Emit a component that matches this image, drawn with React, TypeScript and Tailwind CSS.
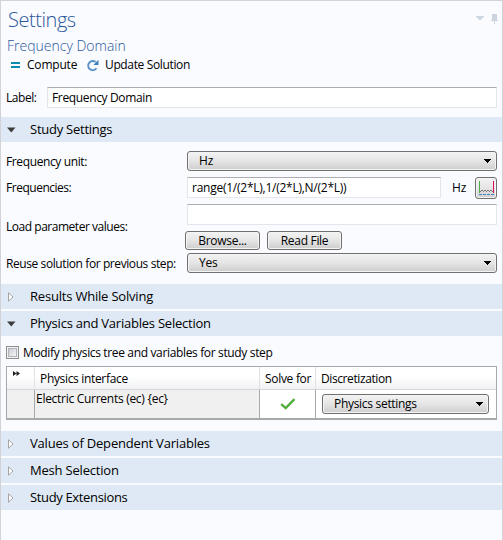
import React from "react";

function Caret({ className = "" }: { className?: string }) {
  return (
    <svg className={className} width="7" height="4" viewBox="0 0 7 4" shapeRendering="crispEdges">
      <path d="M0 0h7v1H6v1H5v1H4v1H3V3H2V2H1V1H0z" fill="#000" />
    </svg>
  );
}

function Section({ title, open = false, tracking }: { title: string; open?: boolean; tracking: string }) {
  return (
    <div className="flex h-[25px] shrink-0 items-center bg-[#dfe9f5] text-[13px]">
      <div className="flex w-[29px] pl-[6px]">
        {open ? (
          <svg width="9" height="6" viewBox="0 0 9 6">
            <path d="M0 .5h8.5L4.3 5.5z" fill="#3c3c3c" />
          </svg>
        ) : (
          <svg className="ml-px" width="6" height="10" viewBox="0 0 6 10">
            <path d="M.5 .8v8.4L5 5z" fill="#fff" stroke="#9b9b9b" strokeWidth=".9" />
          </svg>
        )}
      </div>
      <span className={tracking}>{title}</span>
    </div>
  );
}

const buttonLook =
  "rounded-[3px] border border-[#707070] bg-linear-to-b from-[#f3f3f3] via-[#e5e5e5] to-[#cdcdcd] shadow-[inset_0_0_0_1px_#f4f4f4]";
const fieldLook = "h-[21px] border border-[#e3e6ec] border-t-[#abadb3] bg-white";

function Select({ value, tracking, className = "" }: { value: string; tracking: string; className?: string }) {
  return (
    <div className={`flex h-5 items-center justify-between pr-[5px] ${buttonLook} ${className}`}>
      <span className={tracking}>{value}</span>
      <Caret />
    </div>
  );
}

export default function App() {
  return (
    <div className="flex h-[540px] w-[503px] flex-col overflow-hidden border-x border-t border-[#d2d3d8] bg-[#fafbff] font-['Open_Sans','Noto_Sans',sans-serif] text-[12px] leading-none whitespace-nowrap text-black">
      <div className="flex h-[36px] items-start justify-between pt-[8px] pr-[4px] pl-[7px]">
        <h1 className="text-[20px] leading-[22px] font-light tracking-[-0.45px] text-[#29579b]">Settings</h1>
        <div className="flex items-start gap-[7px] pt-[5px]">
          <svg className="mt-[2px]" width="8" height="4" viewBox="0 0 8 4" shapeRendering="crispEdges">
            <path d="M0 0h8v1H7v1H6v1H5v1H3V3H2V2H1V1H0z" fill="#ccd4df" />
          </svg>
          <svg width="7" height="10" viewBox="0 0 7 10" shapeRendering="crispEdges">
            <path d="M1 0h5v6h1v1H4v3H3V7H0V6h1z" fill="#ccd4df" />
          </svg>
        </div>
      </div>
      <h2 className="h-[19px] pl-[6px] text-[14px] leading-[18px] font-light text-[#29579b]">
        Frequency Domain
      </h2>
      <div className="flex h-[18px] items-center pl-[10px]">
        <svg width="9" height="6" viewBox="0 0 9 6" shapeRendering="crispEdges">
          <path d="M0 0h9v2H0zM0 4h9v2H0z" fill="#078bb2" />
        </svg>
        <span className="ml-[7px] w-[59px] tracking-[-0.2px]">Compute</span>
        <svg width="14" height="13" viewBox="0 0 14 13">
          <path d="M10.5 9.3A4.6 4.6 0 1 1 9.6 3" fill="none" stroke="#5b92c8" strokeWidth="1.9" />
          <path d="M12.5 .8v5.1H7.4z" fill="#3c7fbd" />
        </svg>
        <span className="ml-[5px] tracking-[-0.36px]">Update Solution</span>
      </div>
      <div className="mt-[13px] flex h-[21px] items-center pl-[5px]">
        <span className="w-[41px] tracking-[-0.45px]">Label:</span>
        <div className={`flex w-[450px] items-center pl-[4px] ${fieldLook}`}>
          <span className="tracking-[-0.35px]">Frequency Domain</span>
        </div>
      </div>
      <div className="h-[9px] shrink-0" />
      <Section title="Study Settings" open tracking="tracking-[-0.25px]" />

      <div className="mt-[9px] flex h-5 items-center pl-[5px]">
        <span className="w-[181px] pt-[2px] tracking-[-0.38px]">Frequency unit:</span>
        <Select value="Hz" tracking="tracking-[-0.2px]" className="w-[310px] pl-[11px]" />
      </div>
      <div className="mt-[6px] flex h-[21px] items-center pl-[5px]">
        <span className="w-[181px] tracking-[-0.48px]">Frequencies:</span>
        <div className={`flex w-[254px] items-center pl-[4px] ${fieldLook}`}>
          <span className="tracking-[-0.25px]">range(1/(2*L),1/(2*L),N/(2*L))</span>
        </div>
        <span className="w-[34px] pl-[11px]">Hz</span>
        <div className={`flex h-[22px] w-[22px] items-center justify-center ${buttonLook}`}>
          <svg width="16" height="16" viewBox="0 0 16 16" shapeRendering="crispEdges">
            <path d="M1 1h1v12H1z" fill="#52ae48" />
            <path d="M15 1h1v12h-1z" fill="#dc0d62" />
            <path d="M2 11h1v1H2zM3 10h2v1H3zM5 11h1v1H5zM6 10h2v1H6zM8 11h1v1H8zM9 10h2v1H9zM11 11h1v1h-1zM12 10h2v1h-2zM14 11h1v1h-1z" fill="#777" />
            <path d="M1 14h3v1H1zM5 14h3v1H5zM9 14h3v1H9zM13 14h3v1h-3z" fill="#4387c7" />
          </svg>
        </div>
      </div>
      <div className="mt-[6px] flex h-[46px] items-center pl-[5px]">
        <span className="w-[179px] pb-px tracking-[-0.47px]">Load parameter values:</span>
        <div className="flex flex-col gap-[6px]">
          <div className={`ml-[2px] w-[310px] ${fieldLook}`} />
          <div className="flex gap-[7px]">
            <div className={`flex h-[19px] w-[75px] items-center justify-center ${buttonLook}`}>
              <span className="tracking-[-0.3px]">Browse...</span>
            </div>
            <div className={`flex h-[19px] w-[75px] items-center justify-center ${buttonLook}`}>
              <span className="tracking-[-0.3px]">Read File</span>
            </div>
          </div>
        </div>
      </div>
      <div className="mt-[3px] flex h-5 items-center pl-[5px]">
        <span className="w-[181px] pt-[2px] tracking-[-0.41px]">Reuse solution for previous step:</span>
        <Select value="Yes" tracking="tracking-[-0.2px]" className="w-[310px] pl-[11px]" />
      </div>

      <div className="mt-[11px] flex flex-col gap-[2px]">
        <Section title="Results While Solving" tracking="tracking-[-0.2px]" />
        <Section title="Physics and Variables Selection" open tracking="tracking-[-0.23px]" />
      </div>

      <div className="mt-[10px] flex h-[13px] items-center pl-[5px]">
        <div className="flex h-[13px] w-[13px] items-center justify-center border border-[#8e8f8f] bg-[#f4f4f4]">
          <div className="h-[9px] w-[9px] border border-[#aeb3b9] bg-linear-to-br from-[#cbcfd5] to-[#f6f6f6]" />
        </div>
        <span className="ml-[4px] tracking-[-0.35px]">Modify physics tree and variables for study step</span>
      </div>

      <div className="mt-[7px] ml-[5px] h-[54px] w-[491px] border border-b-2 border-[#a7a8ac] bg-white">
        <div className="grid h-[23px] grid-cols-[28px_225px_56px_180px] border-b border-[#d5d5d5] bg-linear-to-b from-white from-40% to-[#f1f2f4]">
          <div className="border-r border-[#e0e1e3] pt-[4px] pl-[6px]">
            <svg width="7" height="5" viewBox="0 0 7 5">
              <path d="M0 0l3.5 2.5L0 5zM3.5 0L7 2.5 3.5 5z" fill="#222" />
            </svg>
          </div>
          <div className="flex items-center border-r border-[#e0e1e3] pt-[2px] pl-[5px]">
            <span className="tracking-[-0.33px]">Physics interface</span>
          </div>
          <div className="flex items-center border-r border-[#e0e1e3] pt-[2px] pl-[5px]">
            <span className="tracking-[-0.3px]">Solve for</span>
          </div>
          <div className="flex items-center pt-[2px] pl-[5px]">
            <span className="tracking-[-0.4px]">Discretization</span>
          </div>
        </div>
        <div className="grid h-[28px] grid-cols-[28px_225px_56px_180px]">
          <div className="border-r border-[#a7a8ac] bg-[#f0f0f0]" />
          <div className="border-r border-[#a7a8ac] bg-[#f0f0f0] pt-[3px] pl-px">
            <span className="tracking-[-0.28px]">Electric Currents (ec) {"{ec}"}</span>
          </div>
          <div className="flex items-center justify-center border-r border-[#a7a8ac]">
            <svg width="16" height="12" viewBox="0 0 16 12">
              <path d="M1.2 6.2l4.5 4L14.5 1.2" fill="none" stroke="#52ae3e" strokeWidth="2.4" />
            </svg>
          </div>
          <div className="flex items-center pl-[6px]">
            <Select value="Physics settings" tracking="tracking-[-0.3px]" className="w-[167px] pl-[11px]" />
          </div>
        </div>
      </div>

      <div className="mt-[11px] flex flex-col gap-[2px]">
        <Section title="Values of Dependent Variables" tracking="tracking-[-0.19px]" />
        <Section title="Mesh Selection" tracking="tracking-[-0.2px]" />
        <Section title="Study Extensions" tracking="tracking-[-0.35px]" />
      </div>
    </div>
  );
}
